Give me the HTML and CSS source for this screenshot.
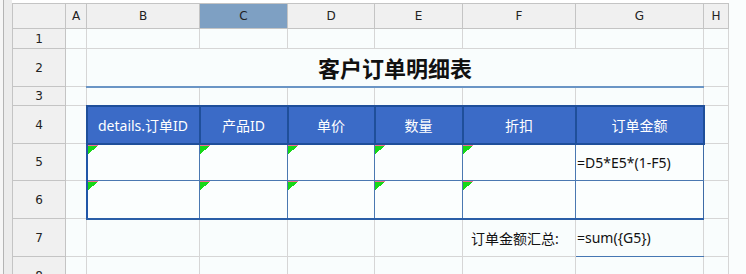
FILE: index.html
```html
<!DOCTYPE html>
<html lang="zh-CN">

<head>
    <meta charset="UTF-8">
    <meta name="viewport" content="width=device-width, initial-scale=1.0">
    <title>客户订单明细表</title>
    <link rel="stylesheet" href="styles.css">
</head>

<body>

    <div class="sheet">
        <div class="gutter"></div>

        <div class="grid-wrap">
            <table class="grid">
                <colgroup>
                    <col class="w-head">
                    <col class="w-a">
                    <col class="w-b">
                    <col class="w-c">
                    <col class="w-d">
                    <col class="w-e">
                    <col class="w-f">
                    <col class="w-g">
                    <col class="w-h">
                </colgroup>

                <!-- 列标题 -->
                <tr class="row-head">
                    <th class="corner"></th>
                    <th>A</th>
                    <th>B</th>
                    <th class="selected">C</th>
                    <th>D</th>
                    <th>E</th>
                    <th>F</th>
                    <th>G</th>
                    <th>H</th>
                </tr>

                <tr class="row-1">
                    <th>1</th>
                    <td></td><td></td><td></td><td></td><td></td><td></td><td></td><td></td>
                </tr>

                <!-- 标题 -->
                <tr class="row-2">
                    <th>2</th>
                    <td></td>
                    <td colspan="6" class="title">客户订单明细表</td>
                    <td></td>
                </tr>

                <tr class="row-3">
                    <th>3</th>
                    <td></td><td></td><td></td><td></td><td></td><td></td><td></td><td></td>
                </tr>

                <!-- 表头 -->
                <tr class="row-4">
                    <th>4</th>
                    <td></td>
                    <td class="head-cell">details.订单ID</td>
                    <td class="head-cell">产品ID</td>
                    <td class="head-cell">单价</td>
                    <td class="head-cell">数量</td>
                    <td class="head-cell">折扣</td>
                    <td class="head-cell">订单金额</td>
                    <td></td>
                </tr>

                <tr class="row-5">
                    <th>5</th>
                    <td></td>
                    <td class="body-cell first flag"></td>
                    <td class="body-cell flag"></td>
                    <td class="body-cell flag"></td>
                    <td class="body-cell flag"></td>
                    <td class="body-cell flag"></td>
                    <td class="body-cell last formula">=D5*E5*(1-F5)</td>
                    <td></td>
                </tr>

                <tr class="row-6">
                    <th>6</th>
                    <td></td>
                    <td class="body-cell first flag bottom"></td>
                    <td class="body-cell flag bottom"></td>
                    <td class="body-cell flag bottom"></td>
                    <td class="body-cell flag bottom"></td>
                    <td class="body-cell flag bottom"></td>
                    <td class="body-cell last bottom"></td>
                    <td></td>
                </tr>

                <!-- 汇总 -->
                <tr class="row-7">
                    <th>7</th>
                    <td></td><td></td><td></td><td></td><td></td>
                    <td class="label">订单金额汇总:</td>
                    <td class="formula total">=sum({G5})</td>
                    <td></td>
                </tr>

                <tr class="row-8">
                    <th>8</th>
                    <td></td><td></td><td></td><td></td><td></td><td></td><td></td><td></td>
                </tr>
            </table>
        </div>
    </div>

</body>

</html>
```

FILE: styles.css
```css
body {
    margin: 0;
    padding: 0;
    background-color: #fafdfd;
    font-family: "Noto Sans", "Noto Sans CJK SC", sans-serif;
    overflow: hidden;
}

.sheet {
    display: flex;
    align-items: flex-start;
    height: 274px;
}

.gutter {
    width: 12px;
    align-self: stretch;
    background: linear-gradient(to right, #f6f6f6 3px, #b4b4b4 3px, #b4b4b4 4px, #ececec 4px);
}

.grid-wrap {
    padding-top: 3px;
    background-color: #ffffff;
}

.grid {
    border-collapse: collapse;
    table-layout: fixed;
    width: 716px;
}

.w-head { width: 53px; }
.w-a { width: 21px; }
.w-b { width: 113px; }
.w-c { width: 88px; }
.w-d { width: 87px; }
.w-e { width: 88px; }
.w-f { width: 113px; }
.w-g { width: 128px; }
.w-h { width: 25px; }

.row-head { height: 25px; }
.row-1 { height: 20px; }
.row-2 { height: 38px; }
.row-3 { height: 19px; }
.row-4 { height: 38px; }
.row-5 { height: 37px; }
.row-6 { height: 38px; }
.row-7 { height: 38px; }
.row-8 { height: 38px; }

th {
    background-color: #f0f0f0;
    border: 1px solid #c4c4c4;
    padding: 0;
    font-family: "DejaVu Sans", sans-serif;
    font-size: 12px;
    font-weight: normal;
    color: #222;
    text-align: center;
}

th.selected {
    background-color: #7ea0c3;
}

td {
    background-color: #f9fdfd;
    border: 1px solid #d6d6d6;
    padding: 0;
    font-size: 14px;
    color: #111;
    white-space: nowrap;
    overflow: hidden;
}

.title {
    text-align: center;
    font-family: "Noto Sans CJK SC", sans-serif;
    font-size: 22px;
    font-weight: bold;
    border-bottom: 2px solid #6a95c5;
}

.head-cell {
    background-color: #3b6bc7;
    border: 2px solid #1f4f9a;
    color: white;
    text-align: center;
}

.body-cell {
    background-color: #fbfefe;
    border: 1px solid #4a78b1;
}

.body-cell.first {
    border-left: 2px solid #2056a8;
}

.body-cell.bottom {
    border-bottom: 2px solid #2a5ea7;
}

.body-cell.last {
    border-right: 1px solid #3e6ba6;
}

.flag {
    position: relative;
}

.flag::before {
    content: "";
    position: absolute;
    top: 0;
    left: 0;
    width: 10px;
    height: 8px;
    border-top: 1px solid #f0708f;
    background: linear-gradient(to bottom right, #17d817 50%, transparent 50%);
}

.formula {
    padding-left: 1px;
}

.label {
    text-align: left;
    padding-left: 8px;
}

.total {
    border-bottom: 1px solid #4677b3;
}
```
